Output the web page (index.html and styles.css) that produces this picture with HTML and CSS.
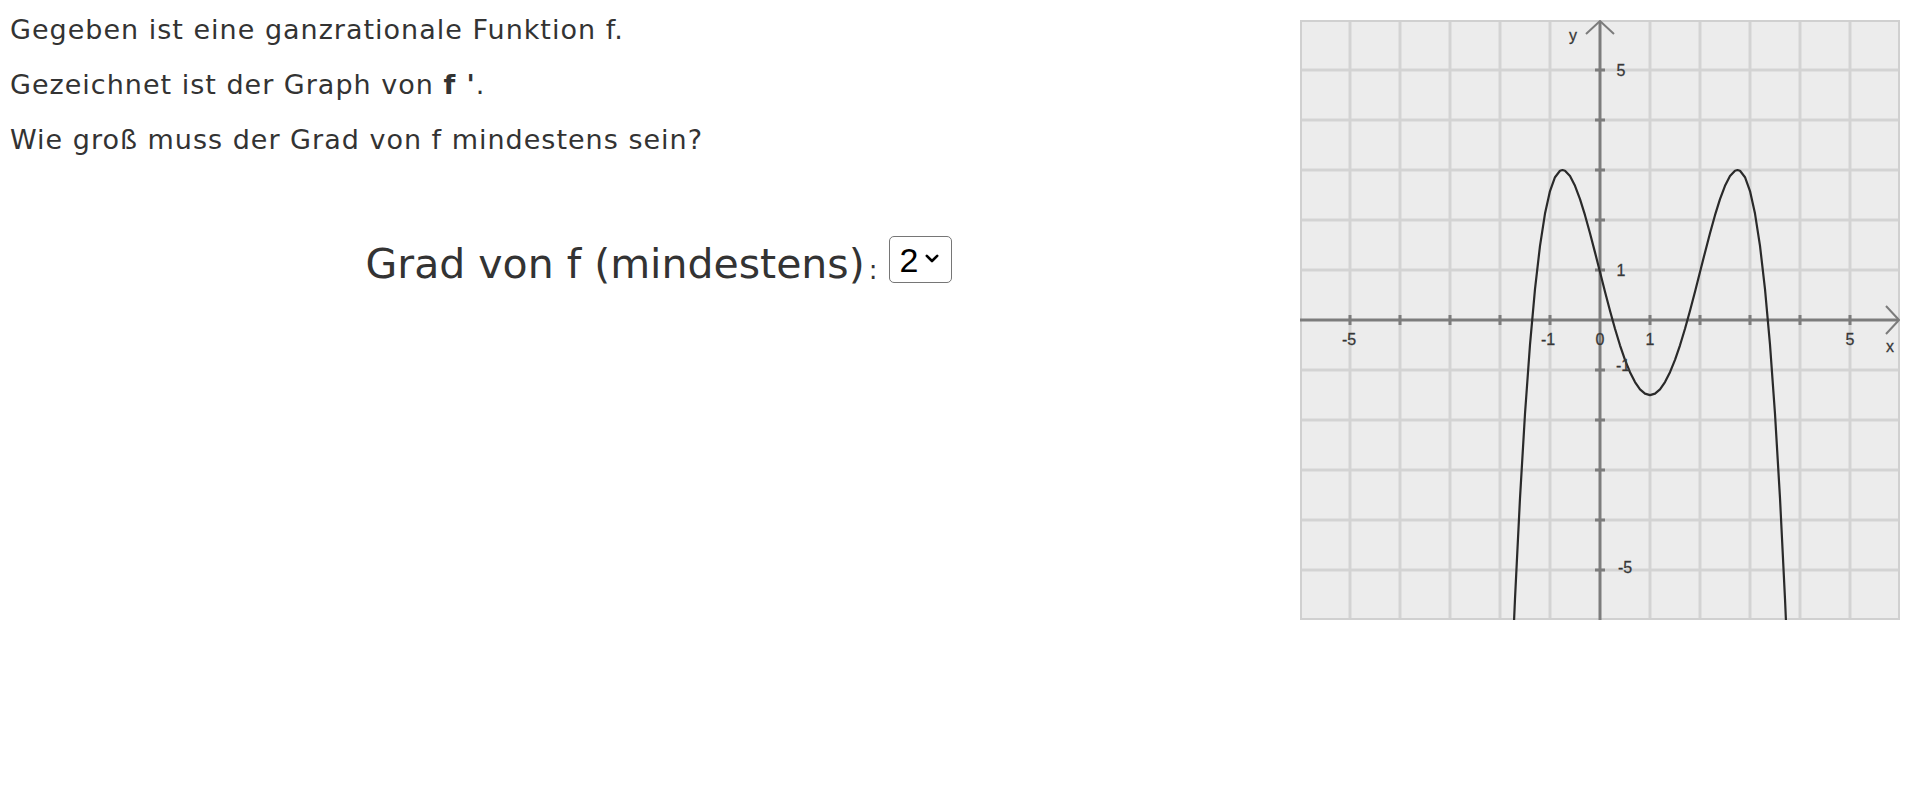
FILE: index.html
```html
<!DOCTYPE html>
<html lang="de">
<head>
<meta charset="utf-8">
<title>Grad von f</title>
<link rel="stylesheet" href="styles.css">
</head>
<body>
<div class="page">
  <div class="task">
    <p class="line">Gegeben ist eine ganzrationale Funktion f.</p>
    <p class="line">Gezeichnet ist der Graph von <b>f '</b>.</p>
    <p class="line">Wie groß muss der Grad von f mindestens sein?</p>
    <div class="answer">
      <span class="label">Grad von f (mindestens)</span><span class="colon">:</span>
      <span class="select-wrap">
        <select class="degree">
          <option>2</option>
          <option>3</option>
          <option>4</option>
          <option>5</option>
          <option>6</option>
        </select>
        <svg class="chevron" width="14" height="9" viewBox="0 0 14 9"><polyline points="1.8,1.8 7,7 12.2,1.8" fill="none" stroke="#000" stroke-width="2.6" stroke-linecap="round" stroke-linejoin="round"/></svg>
      </span>
    </div>
  </div>
  <div class="figure">
    <svg class="graph" width="600" height="600" viewBox="0 0 600 600">
      <rect x="0" y="0" width="600" height="600" fill="#ececec"/>
      <g stroke="#d3d3d3" stroke-width="3">
        <line x1="50" y1="0" x2="50" y2="600"/>
        <line x1="100" y1="0" x2="100" y2="600"/>
        <line x1="150" y1="0" x2="150" y2="600"/>
        <line x1="200" y1="0" x2="200" y2="600"/>
        <line x1="250" y1="0" x2="250" y2="600"/>
        <line x1="350" y1="0" x2="350" y2="600"/>
        <line x1="400" y1="0" x2="400" y2="600"/>
        <line x1="450" y1="0" x2="450" y2="600"/>
        <line x1="500" y1="0" x2="500" y2="600"/>
        <line x1="550" y1="0" x2="550" y2="600"/>
        <line x1="0" y1="50" x2="600" y2="50"/>
        <line x1="0" y1="100" x2="600" y2="100"/>
        <line x1="0" y1="150" x2="600" y2="150"/>
        <line x1="0" y1="200" x2="600" y2="200"/>
        <line x1="0" y1="250" x2="600" y2="250"/>
        <line x1="0" y1="350" x2="600" y2="350"/>
        <line x1="0" y1="400" x2="600" y2="400"/>
        <line x1="0" y1="450" x2="600" y2="450"/>
        <line x1="0" y1="500" x2="600" y2="500"/>
        <line x1="0" y1="550" x2="600" y2="550"/>
      </g>
      <rect x="1" y="1" width="598" height="598" fill="none" stroke="#d0d0d0" stroke-width="2"/>
      <g stroke="#7c7c7c" stroke-width="3">
        <line x1="0" y1="300" x2="598" y2="300"/>
        <line x1="300" y1="2" x2="300" y2="600"/>
        <line x1="50" y1="295" x2="50" y2="305"/>
        <line x1="100" y1="295" x2="100" y2="305"/>
        <line x1="150" y1="295" x2="150" y2="305"/>
        <line x1="200" y1="295" x2="200" y2="305"/>
        <line x1="250" y1="295" x2="250" y2="305"/>
        <line x1="350" y1="295" x2="350" y2="305"/>
        <line x1="400" y1="295" x2="400" y2="305"/>
        <line x1="450" y1="295" x2="450" y2="305"/>
        <line x1="500" y1="295" x2="500" y2="305"/>
        <line x1="550" y1="295" x2="550" y2="305"/>
        <line x1="295" y1="50" x2="305" y2="50"/>
        <line x1="295" y1="100" x2="305" y2="100"/>
        <line x1="295" y1="150" x2="305" y2="150"/>
        <line x1="295" y1="200" x2="305" y2="200"/>
        <line x1="295" y1="250" x2="305" y2="250"/>
        <line x1="295" y1="350" x2="305" y2="350"/>
        <line x1="295" y1="400" x2="305" y2="400"/>
        <line x1="295" y1="450" x2="305" y2="450"/>
        <line x1="295" y1="500" x2="305" y2="500"/>
        <line x1="295" y1="550" x2="305" y2="550"/>
      </g>
      <g fill="none" stroke="#7c7c7c" stroke-width="2">
        <polyline points="286,14 300,1 314,14"/>
        <polyline points="586,286 599,300 586,314"/>
      </g>
      <polyline fill="none" stroke="#2a2a2a" stroke-width="2.2" stroke-linejoin="round"
        points="212.5,636 215,578.9 220,478.1 225,393.8 230,324.6 235,269.1 240,225.8 245,193.6 250,171.1 255,157.2 260,150.8 262.5,150 265,150.7 270,156.1 275,165.8 280,179.2 285,195.2 290,213.2 295,232.4 300,252.1 305,271.8 310,290.8 315,308.8 320,325.3 325,339.8 330,352.2 335,362.1 340,369.3 345,373.6 350,375.1 355,373.6 360,369.3 365,362.1 370,352.2 375,339.8 380,325.3 385,308.8 390,290.8 395,271.8 400,252.1 405,232.4 410,213.2 415,195.2 420,179.2 425,165.8 430,156.1 435,150.7 437.5,150 440,150.8 445,157.2 450,171.1 455,193.6 460,225.8 465,269.1 470,324.6 475,393.8 480,478.1 485,578.9 487.5,636"/>
      <g class="ticklabels">
        <text x="273" y="21">y</text>
        <text x="590" y="332">x</text>
        <text x="321" y="56">5</text>
        <text x="321" y="256">1</text>
        <text x="323" y="351">-1</text>
        <text x="325" y="553">-5</text>
        <text x="49" y="325">-5</text>
        <text x="248" y="325">-1</text>
        <text x="300" y="325">0</text>
        <text x="350" y="325">1</text>
        <text x="550" y="325">5</text>
      </g>
    </svg>
  </div>
</div>
</body>
</html>
```

FILE: styles.css
```css
html, body {
  margin: 0;
  padding: 0;
  background: #ffffff;
}

.page {
  display: flex;
  justify-content: space-between;
  align-items: flex-start;
  width: 1920px;
}

.task {
  flex: 1;
  padding: 14px 0 0 10px;
  font-family: "DejaVu Sans", Verdana, sans-serif;
  color: #333333;
}

.line {
  margin: 0 0 24px 0;
  font-size: 27px;
  letter-spacing: 1px;
  line-height: 31px;
}

.answer {
  display: flex;
  justify-content: center;
  align-items: center;
  margin-top: 81px;
  padding-left: 8px;
}

.label {
  font-size: 41px;
}

.colon {
  font-size: 26px;
  margin-left: 4px;
  margin-right: 12px;
  align-self: flex-end;
  padding-bottom: 6px;
}

.select-wrap {
  position: relative;
  display: inline-block;
  margin-bottom: 8px;
}

.degree {
  -webkit-appearance: none;
  appearance: none;
  display: block;
  box-sizing: border-box;
  font-family: "Liberation Sans", Arial, sans-serif;
  font-size: 34px;
  line-height: 40px;
  height: 47px;
  width: 63px;
  padding: 0 0 0 9px;
  margin: 0;
  color: #000000;
  border: 1.5px solid #767676;
  border-radius: 5px;
  background: #ffffff;
}

.chevron {
  position: absolute;
  right: 13px;
  top: 18px;
  pointer-events: none;
}

.figure {
  padding: 20px 20px 0 0;
}

.graph {
  display: block;
}

.ticklabels text {
  font-family: "Liberation Sans", Arial, sans-serif;
  font-size: 16px;
  fill: #333333;
  stroke: #444444;
  stroke-width: 0.3;
  text-anchor: middle;
}
```
